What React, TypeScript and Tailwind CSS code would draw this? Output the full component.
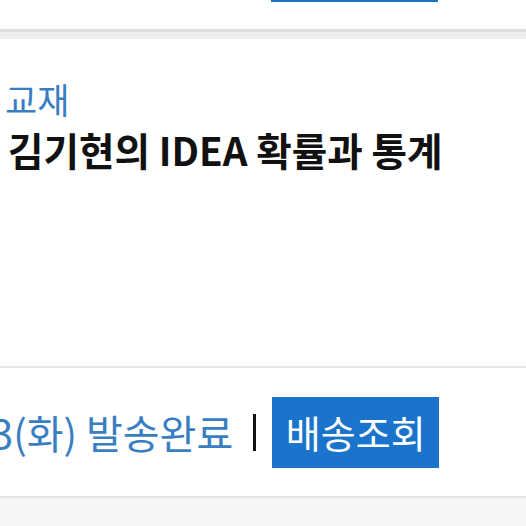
export default function App() {
  return (
    <div
      className="w-[526px] h-[526px] overflow-hidden bg-white flex flex-col"
      style={{ fontFamily: '"Noto Sans CJK KR", "Noto Sans", sans-serif' }}
    >
      {/* previous order card, cut off */}
      <div className="h-[29px] shrink-0 flex">
        <div className="ml-[271px] w-[167px] h-[71px] mt-[-69px] bg-[#1b74cb]" />
      </div>
      <div className="h-[3px] shrink-0 bg-[#dedede]" />
      <div className="h-[7px] shrink-0 bg-[#eeeeee]" />

      {/* item */}
      <div className="h-[327px] shrink-0 flex flex-col pl-[5px] pt-[40px]">
        <div className="text-[35px] leading-[40px] text-[#3a7ec2] whitespace-nowrap">교재</div>
        <div className="mt-[8px] text-[38.6px] leading-[44px] font-bold text-[#111] pl-[3px] whitespace-nowrap">
          김기현의 IDEA 확률과 통계
        </div>
      </div>
      <div className="h-[2px] shrink-0 bg-[#e6e6e6]" />

      {/* delivery row */}
      <div className="h-[128px] shrink-0 flex items-center ml-[-9px]">
        <span className="text-[40px] leading-none text-[#3a7ec2] whitespace-nowrap">3(화) 발송완료</span>
        <span className="ml-[20px] w-[3px] h-[37px] bg-[#111] shrink-0" />
        <button className="ml-[16px] w-[167px] h-[71px] shrink-0 bg-[#1b74cb] text-white text-[38px] leading-none">
          배송조회
        </button>
      </div>
      <div className="h-[2px] shrink-0 bg-[#e4e4e4]" />
      <div className="flex-1 bg-[#f5f6f8]" />
    </div>
  )
}
